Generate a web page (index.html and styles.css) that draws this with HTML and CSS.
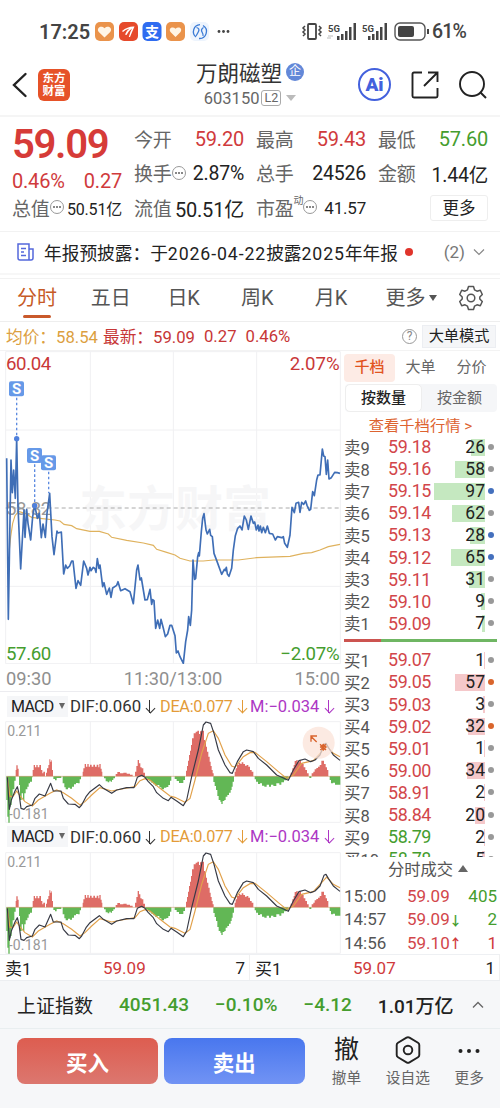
FILE: index.html
```html
<!DOCTYPE html>
<html lang="zh-CN">

<head>
  <meta charset="UTF-8">
  <meta name="viewport" content="width=device-width, initial-scale=1.0">
  <title>万朗磁塑 603150</title>
  <link rel="stylesheet" href="styles.css">
</head>

<body>
  <!-- status bar -->
  <div class="status-bar">
    <span class="clock">17:25</span>
    <svg class="status-apps" width="140" height="20" viewBox="0 0 140 20">
      <rect x="0" y="0" width="19" height="19" rx="5" fill="#ea934b"/>
      <path d="M9.500 15.500L3.800 10C1 6.500 5.500 2.500 9.500 6.200C13.500 2.500 18 6.500 15.200 10Z" fill="#fff5e6"/>
      <rect x="24" y="0" width="19" height="19" rx="5" fill="#e64a2b"/>
      <path d="M27 9Q33 4 39.500 4.500Q37 10 35 15L33.800 15Q35 10 37 6.500Q33 9 31.500 13L30 12.500Q31 9 34.500 6.500Q30 7.500 28 10Z" fill="#fff"/>
      <rect x="47.500" y="0" width="19" height="19" rx="5" fill="#2f6cf0"/>
      <text x="57" y="14.500" class="app-char">支</text>
      <rect x="71" y="0" width="19" height="19" rx="5" fill="#ea934b"/>
      <path d="M80.500 15L75.500 10C73 6.500 77.500 4 80.500 6.700C83.500 4 88 6.500 85.500 10Z" fill="#fff5e6"/>
      <rect x="95" y="0" width="19" height="19" rx="5" fill="#edf4fd"/>
      <g fill="none" stroke="#3b7bd6" stroke-width="1.300">
        <path d="M101 15A7 7 0 0 1 105 2.600M108 3.500A7 7 0 0 1 104 16.500"/>
        <path d="M101.500 5.500Q105 6.500 103.500 9.500T101 14M108.500 5.500Q105.500 7.500 107 10T108 14"/>
      </g>
      <g fill="#444"><circle cx="124" cy="9.500" r="1.400"/><circle cx="128.500" cy="9.500" r="1.400"/><circle cx="133" cy="9.500" r="1.400"/></g>
    </svg>
    <svg class="status-signal" width="130" height="20" viewBox="0 0 130 20">
      <rect x="7" y="2" width="8" height="15" rx="1" fill="none" stroke="#444" stroke-width="1.800"/>
      <path d="M4 4L2 6L4 8L2 10L4 12L2 14M18 4L20 6L18 8L20 10L18 12L20 14" fill="none" stroke="#444" stroke-width="1.500"/>
      <g fill="#444">
        <text x="27" y="9.500" class="net">5G</text>
        <path d="M36 14h2.500v4H36zM40 12h2.500v6H40zM44 9h2.500v9H44zM48 5h2.500v13H48zM52.500 1h2.500v17h-2.500z"/>
        <text x="61" y="9.500" class="net">5G</text>
        <path d="M67 14h2.500v4H67zM71 12h2.500v6H71zM75 9h2.500v9H75zM79 5h2.500v13H79zM83.500 1H86v17h-2.500z"/>
        <rect x="97" y="4" width="16" height="11" rx="2"/>
        <path d="M126 7h2v5h-2z"/>
      </g>
      <path d="M27 14h5M30 16h-4" stroke="#bbb"/>
      <rect x="94" y="1" width="30" height="17" rx="5" fill="none" stroke="#555" stroke-width="1.400"/>
    </svg>
    <span class="battery">61%</span>
  </div>

  <!-- title bar -->
  <header class="title-bar">
    <svg class="back" width="16" height="26" viewBox="0 0 16 26"><path d="M13.500 2L2 13L13.500 24" fill="none" stroke="#222" stroke-width="2.400" stroke-linecap="round"/></svg>
    <div class="app-logo">东方<br>财富</div>
    <div class="stock">
      <div class="stock-name">万朗磁塑<span class="badge-qi">企</span></div>
      <div class="stock-code">603150<span class="level">L2</span><i class="caret"></i></div>
    </div>
    <div class="ai">Ai</div>
    <svg class="share" width="28" height="28" viewBox="0 0 28 28"><path d="M11 1.500H3Q1.500 1.500 1.500 3V25Q1.500 26.500 3 26.500H25Q26.500 26.500 26.500 25V17M17 1.500H26.500V11M26 2L13 15" fill="none" stroke="#222" stroke-width="1.900"/></svg>
    <svg class="search" width="28" height="28" viewBox="0 0 28 28"><circle cx="13" cy="13" r="12" fill="none" stroke="#222" stroke-width="1.900"/><path d="M21.500 21.500L27 27" stroke="#222" stroke-width="2"/></svg>
  </header>

  <!-- quote -->
  <section class="quote">
    <div class="quote-col first">
      <div class="last-price">59.09</div>
      <div class="cell change"><span>0.46%</span><span>0.27</span></div>
      <div class="cell"><label>总值<i class="more-dot"></i></label><span class="small">50.51亿</span></div>
    </div>
    <div class="quote-col">
      <div class="cell"><label>今开</label><span class="red">59.20</span></div>
      <div class="cell"><label>换手<i class="more-dot"></i></label><span class="mid">2.87%</span></div>
      <div class="cell"><label>流值</label><span>50.51亿</span></div>
    </div>
    <div class="quote-col">
      <div class="cell"><label>最高</label><span class="red">59.43</span></div>
      <div class="cell"><label>总手</label><span class="mid">24526</span></div>
      <div class="cell"><label>市盈<sup>动</sup><i class="more-dot"></i></label><span class="pe">41.57</span></div>
    </div>
    <div class="quote-col">
      <div class="cell"><label>最低</label><span class="green">57.60</span></div>
      <div class="cell"><label>金额</label><span class="mid">1.44亿</span></div>
      <div class="cell end"><button class="more-btn">更多</button></div>
    </div>
  </section>

  <!-- notice -->
  <section class="notice">
    <svg width="17" height="18" viewBox="0 0 17 18"><path d="M1 1H12V17H3Q1 17 1 15ZM12 6H16V15Q16 17 14 17H11M4 5.500H9M4 9H7M4 12.500H9" fill="none" stroke="#5468dc" stroke-width="1.500"/></svg>
    <span class="notice-text">年报预披露：于<span class="num">2026-04-22</span>披露<span class="num">2025</span>年年报</span>
    <i class="red-dot"></i>
    <span class="notice-count">(2)</span>
    <svg width="12" height="8" viewBox="0 0 12 8"><path d="M1 1.500L6 6.500L11 1.500" fill="none" stroke="#888" stroke-width="1.200"/></svg>
  </section>

  <!-- period tabs -->
  <nav class="tabs">
    <a class="active">分时</a>
    <a>五日</a>
    <a>日K</a>
    <a>周K</a>
    <a>月K</a>
    <a class="tab-more">更多<i></i></a>
    <svg width="24" height="26" viewBox="0 0 24 26"><path d="M9.500 1.500H14.500L15.500 4.800L18 6.200L21.300 5.300L23.300 9.500L20.800 12V14L23.300 16.500L21.300 20.700L18 19.800L15.500 21.200L14.500 24.500H9.500L8.500 21.200L6 19.800L2.700 20.700L.7 16.500L3.200 14V12L.7 9.500L2.700 5.300L6 6.200L8.500 4.800Z" fill="none" stroke="#555" stroke-width="1.500" stroke-linejoin="round"/><circle cx="12" cy="13" r="3.800" fill="none" stroke="#555" stroke-width="1.500"/></svg>
  </nav>

  <div class="info-row">
    <span class="avg">均价：58.54</span>
    <span class="latest">最新：59.09</span>
    <span class="latest">0.27</span>
    <span class="latest">0.46%</span>
    <i class="help">?</i>
    <button class="mode-btn">大单模式</button>
  </div>

  <main class="main">
    <div class="charts">
      <!-- 3 units per pixel -->
      <svg class="price-chart" width="342" height="313" viewBox="0 3 1026 939">
        <g class="grid">
          <path d="M17 5V941H1021V5ZM271 5V941M520 5V941M770 5V941M17 240H1021M17 709H1021"/>
        </g>
        <text class="watermark" x="238" y="527" textLength="575">东方财富</text>
        <path class="mid-line" d="M17 474H1021"/>
        <text class="mid-label" x="18" y="494" textLength="136">58.82</text>
        <polyline class="avg-line" points="28,600 32,560 38,520 45,497 56,484 75,490 95,502 120,505 165,510 180,513 192,523 215,527 230,536 270,544 298,544 325,552 335,562 380,571 430,579 460,586 470,598 500,607 525,615 540,625 570,633 610,633 640,630 715,630 770,623 870,619 910,610 935,608 960,600 985,590 1020,583"/>
        <polyline class="price-line" points="20,325 25,808 33,330 37,428 41,360 46,445 50,266 54,470 62,657 72,480 75,562 80,478 84,520 92,570 98,500 104,465 112,505 118,490 124,563 129,522 136,562 141,490 149,430 156,560 162,614 171,543 174,549 184,546 191,672 197,645 202,655 209,648 215,633 219,633 228,715 234,692 242,706 251,633 260,655 264,675 270,652 273,662 280,652 285,656 288,667 292,626 297,655 300,645 308,710 312,698 320,733 328,714 333,742 338,714 350,706 354,695 362,722 375,716 390,725 400,761 410,660 414,645 420,690 424,684 435,750 442,749 450,718 455,763 458,749 462,752 467,835 473,810 479,835 483,808 490,835 496,860 503,852 510,826 515,826 525,857 529,909 534,903 540,920 550,940 557,875 563,840 566,800 571,826 575,780 579,630 584,688 587,685 593,620 596,608 598,618 604,545 608,505 612,491 618,540 622,552 629,538 632,556 637,560 642,610 651,634 665,673 673,658 676,662 679,652 682,672 687,679 695,655 700,600 706,557 713,535 720,528 726,540 733,498 739,510 745,538 753,498 760,520 764,516 769,540 774,525 777,543 781,528 785,548 790,532 796,548 802,528 808,550 818,552 826,570 832,560 845,563 850,560 854,580 862,592 870,555 876,472 883,488 888,460 896,457 900,487 905,457 911,463 917,453 921,466 928,481 932,478 938,425 943,437 950,390 954,375 960,375 967,297 971,318 975,320 979,373 983,330 987,387 994,383 1004,367 1012,368 1020,370"/>
        <g class="marks">
          <path d="M50 143V262M104 343V465M146 365V430"/>
          <circle cx="50" cy="266" r="8"/><circle cx="104" cy="467" r="8"/>
          <rect x="27" y="94" width="45" height="45" rx="6"/>
          <rect x="81" y="294" width="45" height="45" rx="6"/>
          <rect x="123" y="316" width="45" height="45" rx="6"/>
          <text x="49.500" y="132">S</text><text x="103.500" y="332">S</text><text x="145.500" y="354">S</text>
        </g>
        <text class="axis up" x="18" y="61" textLength="136">60.04</text>
        <text class="axis up" x="869" y="61" textLength="150">2.07%</text>
        <text class="axis down" x="18" y="930" textLength="136">57.60</text>
        <text class="axis down" x="841" y="930" textLength="178">−2.07%</text>
      </svg>
      <div class="times"><span>09:30</span><span>11:30/13:00</span><span>15:00</span></div>

      <div class="macd-head"><span class="macd-select">MACD<i></i></span><span class="dif">DIF:0.060<b></b></span><span class="dea">DEA:0.077<b></b></span><span class="m">M:−0.034<b></b></span></div>
      <svg class="macd-chart" width="342" height="102" viewBox="0 93 1026 306">
        <defs>
          <g id="macd">
            <path class="grid" d="M17 95V397H1021V95ZM271 95V397M520 95V397M770 95V397"/>
            <path fill="#de6c66" d="M47 259V240H49V226H53V236H56V259ZM98 259V240H101V225H105V232H109V225H113V232H118V225H123V240H127V250H130V245H135V259ZM138 259V248H141V235H145V225H148V208H151V215H154V211H156V240H159V259ZM248 259V245H250V235H254V222H258V230H262V222H266V230H270V224H275V230H280V224H285V230H290V224H295V232H298V222H302V236H305V245H307V259ZM347 259V252H352V246H360V250H370V248H380V251H390V254H398V259ZM405 259V245H409V228H413V210H417V220H421V232H425V235H430V248H435V259Z"/>
            <path fill="#de6c66" d="M558 259V242H561V228H564V212H567V195H570V182H573V165H576V145H581V130H587V125H592V122H597V132H600V124H604V122H612V150H615V155H618V170H621V185H625V200H629V215H632V228H635V240H638V250H641V259ZM704 259V245H707V235H711V225H716V219H721V222H725V217H730V222H735V227H740V225H745V230H750V240H755V245H760V259ZM872 259V248H877V235H881V225H884V213H889V210H893V217H898V212H903V220H908V222H911V232H916V240H921V250H926V259ZM935 259V250H940V245H944V238H949V234H954V230H959V225H964V212H972V222H977V232H981V240H985V259Z"/>
            <path fill="#62b755" d="M19 259V330H22V380H25V398H29V350H32V345H35V320H38V298H43V272H47V259ZM57 259V285H60V330H65V310H69V330H73V310H77V298H82V290H86V280H90V275H96V262H98V259ZM160 259V267H165V271H170V264H184V259ZM188 259V280H193V292H197V298H204V293H210V296H216V290H222V283H228V279H234V280H239V268H243V259ZM312 259V265H317V274H323V277H328V272H332V275H336V270H340V265H345V259ZM436 259V265H442V270H448V274H454V278H460V283H466V288H472V285H478V292H484V298H492V293H499V291H505V285H510V272H514V259ZM524 259V267H530V273H537V279H550V270H555V259ZM640 259V276H644V288H648V300H652V318H656V330H661V335H664V342H668V333H673V330H677V320H682V315H687V308H692V300H695V290H698V275H702V259ZM764 259V268H768V275H774V282H780V280H786V287H793V290H800V284H807V290H813V284H820V288H829V280H838V284H844V277H852V271H859V268H865V259ZM928 259V264H934V259ZM989 259V270H993V280H999V278H1005V284H1021V259Z"/>
            <path d="M19 259H1020" stroke="#c98a58" stroke-width="1.500"/>
            <polyline class="dea-line" points="22,262 30,320 40,318 50,303 60,318 75,335 97,348 115,330 150,310 170,300 190,308 215,325 240,345 255,335 275,315 300,293 335,303 365,297 405,290 420,272 435,266 450,270 480,295 510,318 525,322 555,337 570,325 585,270 605,190 625,130 640,122 655,145 675,195 695,228 705,232 730,200 750,188 765,187 800,215 835,245 860,265 880,255 905,220 940,212 960,190 980,168 1000,190 1020,200"/>
            <polyline class="dif-line" points="22,262 28,358 34,330 45,303 52,290 57,310 63,355 72,358 80,350 97,345 105,325 118,312 135,318 143,300 152,280 160,303 183,303 190,325 205,342 225,343 238,353 245,345 258,320 270,305 298,284 310,295 335,310 350,300 380,293 402,293 412,262 425,256 435,262 445,275 460,290 470,308 490,325 505,332 513,322 530,333 550,347 560,330 575,260 595,180 610,105 618,96 632,100 642,130 655,180 675,225 690,248 697,250 712,215 730,185 740,180 760,185 775,205 800,225 830,255 865,271 880,240 897,212 915,207 932,215 945,210 960,195 972,163 978,160 985,172 1000,195 1020,211"/>
            <text class="macd-axis" x="22" y="138" textLength="102">0.211</text>
            <text class="macd-axis" x="26" y="388" textLength="120">-0.181</text>
          </g>
        </defs>
        <use href="#macd"/>
        <!-- expand button -->
        <circle cx="956" cy="158" r="48" fill="#fbe3d8" opacity=".75"/>
        <path d="M950 156L934 140M933 155V138H951M960 163L978 180M961 180L978 163M962 171L970 163L978 171L970 180Z" fill="none" stroke="#d9632c" stroke-width="4"/>
      </svg>
      <div class="macd-head"><span class="macd-select">MACD<i></i></span><span class="dif">DIF:0.060<b></b></span><span class="dea">DEA:0.077<b></b></span><span class="m">M:−0.034<b></b></span></div>
      <svg class="macd-chart" width="342" height="102" viewBox="0 93 1026 306"><use href="#macd"/></svg>
    </div>

    <aside class="book">
      <div class="book-tabs"><span class="active">千档</span><span>大单</span><span>分价</span></div>
      <div class="segment"><span class="active">按数量</span><span>按金额</span></div>
      <a class="book-link">查看千档行情 &gt;</a>
      <div class="levels sell">
        <div class="level-row"><span>卖9</span><span class="p">59.18</span><span class="v"><i style="width:14px"></i>26</span><b></b></div>
        <div class="level-row"><span>卖8</span><span class="p">59.16</span><span class="v"><i style="width:30px"></i>58</span><b></b></div>
        <div class="level-row"><span>卖7</span><span class="p">59.15</span><span class="v"><i style="width:51px"></i>97</span><b class="blue"></b></div>
        <div class="level-row"><span>卖6</span><span class="p">59.14</span><span class="v"><i style="width:33px"></i>62</span><b></b></div>
        <div class="level-row"><span>卖5</span><span class="p">59.13</span><span class="v"><i style="width:15px"></i>28</span><b class="blue"></b></div>
        <div class="level-row"><span>卖4</span><span class="p">59.12</span><span class="v"><i style="width:34px"></i>65</span><b class="blue"></b></div>
        <div class="level-row"><span>卖3</span><span class="p">59.11</span><span class="v"><i style="width:16px"></i>31</span><b></b></div>
        <div class="level-row"><span>卖2</span><span class="p">59.10</span><span class="v"><i style="width:4px"></i>9</span><b></b></div>
        <div class="level-row"><span>卖1</span><span class="p">59.09</span><span class="v"><i style="width:3px"></i>7</span><b></b></div>
      </div>
      <div class="ratio"><i style="width:24.5%"></i></div>
      <div class="levels buy">
        <div class="level-row"><span>买1</span><span class="p">59.07</span><span class="v"><i style="width:1px"></i>1</span><b></b></div>
        <div class="level-row"><span>买2</span><span class="p">59.05</span><span class="v"><i style="width:30px"></i>57</span><b class="orange"></b></div>
        <div class="level-row"><span>买3</span><span class="p">59.03</span><span class="v"><i style="width:2px"></i>3</span><b></b></div>
        <div class="level-row"><span>买4</span><span class="p">59.02</span><span class="v"><i style="width:17px"></i>32</span><b class="orange"></b></div>
        <div class="level-row"><span>买5</span><span class="p">59.01</span><span class="v"><i style="width:1px"></i>1</span><b></b></div>
        <div class="level-row"><span>买6</span><span class="p">59.00</span><span class="v"><i style="width:18px"></i>34</span><b></b></div>
        <div class="level-row"><span>买7</span><span class="p">58.91</span><span class="v"><i style="width:1px"></i>2</span><b></b></div>
        <div class="level-row"><span>买8</span><span class="p">58.84</span><span class="v"><i style="width:10px"></i>20</span><b></b></div>
        <div class="level-row"><span>买9</span><span class="p green">58.79</span><span class="v"><i style="width:1px"></i>2</span><b></b></div>
        <div class="level-row"><span>买10</span><span class="p green">58.78</span><span class="v"><i style="width:3px"></i>5</span><b></b></div>
      </div>
      <div class="deals-title">分时成交<i></i></div>
      <div class="deal"><span>15:00</span><span class="p">59.09</span><em class="green"></em><span class="q green">405</span></div>
      <div class="deal"><span>14:57</span><span class="p">59.09</span><em class="green">↓</em><span class="q green">2</span></div>
      <div class="deal"><span>14:56</span><span class="p">59.10</span><em class="red">↑</em><span class="q red">1</span></div>
    </aside>
  </main>

  <div class="best">
    <div class="best-side"><span>卖1</span><span class="red">59.09</span><span>7</span></div>
    <div class="best-side"><span>买1</span><span class="red">59.07</span><span>1</span></div>
  </div>

  <footer class="footer">
    <div class="index-row">
      <span class="index-name">上证指数</span>
      <span class="green">4051.43</span>
      <span class="green">−0.10%</span>
      <span class="green">−4.12</span>
      <span class="amount">1.01万亿</span>
      <svg width="12" height="8" viewBox="0 0 12 8"><path d="M1 6.500L6 1.500L11 6.500" fill="none" stroke="#666" stroke-width="1.300"/></svg>
    </div>
    <div class="actions">
      <button class="trade buy-btn">买入</button>
      <button class="trade sell-btn">卖出</button>
      <div class="action"><span class="glyph">撤</span>撤单</div>
      <div class="action"><svg width="26" height="28" viewBox="0 0 26 28"><path d="M11.500 1.700Q13 .9 14.500 1.700L23 6.700Q24.300 7.500 24.300 9V19Q24.300 20.500 23 21.300L14.500 26.300Q13 27.100 11.500 26.300L3 21.300Q1.700 20.500 1.700 19V9Q1.700 7.500 3 6.700Z" fill="none" stroke="#222" stroke-width="1.900"/><circle cx="13" cy="14" r="4.300" fill="none" stroke="#222" stroke-width="1.900"/></svg>设自选</div>
      <div class="action"><svg width="26" height="28" viewBox="0 0 26 28"><g fill="#222"><circle cx="4.500" cy="15" r="2"/><circle cx="13" cy="15" r="2"/><circle cx="21.500" cy="15" r="2"/></g></svg>更多</div>
    </div>
  </footer>
</body>

</html>
```
FILE: styles.css
```css
* {
  box-sizing: border-box;
}

body {
  margin: 0;
  width: 500px;
  height: 1108px;
  overflow: hidden;
  background-color: #fff;
  font-family: Roboto, "Noto Sans CJK SC", sans-serif;
  color: #222;
}

i,
em {
  font-style: normal;
}

button {
  font-family: inherit;
  padding: 0;
  border: none;
}

.red {
  color: #d03a3c;
}

.green {
  color: #459d2e;
}

/* status bar */
.status-bar {
  display: flex;
  align-items: center;
  height: 57px;
  padding: 6px 0 0 39px;
  color: #444;
}

.clock {
  width: 56px;
  font-size: 20px;
  font-weight: 600;
}

.app-char {
  font-size: 14px;
  font-weight: 700;
  fill: #fff;
  text-anchor: middle;
}

.status-signal {
  margin-left: 66px;
}

.net {
  font-size: 9.5px;
  font-weight: 700;
}

.battery {
  margin-left: 1px;
  font-size: 19.5px;
  font-weight: 500;
  letter-spacing: -0.8px;
}

/* title bar */
.title-bar {
  display: flex;
  align-items: center;
  height: 60px;
  padding: 0 12px 3px;
  border-bottom: 2px solid #f5f5f5;
}

.app-logo {
  width: 32px;
  height: 32px;
  margin-left: 10px;
  padding-top: 3px;
  border-radius: 6px;
  background-color: #e65228;
  color: #fff;
  font-size: 11.5px;
  line-height: 13px;
  font-weight: 700;
  text-align: center;
}

.stock {
  width: 120px;
  margin-left: 120px;
  text-align: center;
  white-space: nowrap;
}

.stock-name {
  display: flex;
  align-items: center;
  justify-content: center;
  height: 27px;
  font-size: 21.5px;
  color: #333;
}

.badge-qi {
  width: 18px;
  height: 18px;
  margin-left: 4px;
  border-radius: 50%;
  background-color: #6388d8;
  color: #fff;
  font-size: 12px;
  line-height: 17px;
}

.stock-code {
  display: flex;
  align-items: center;
  justify-content: center;
  height: 26px;
  color: #666;
  font-size: 16.5px;
}

.level {
  margin-left: 2px;
  padding: 0 2px;
  border: 1px solid #aaa;
  border-radius: 3px;
  font-size: 12.5px;
  line-height: 14px;
}

.caret {
  margin-left: 5px;
  border: 5px solid transparent;
  border-top: 6px solid #bbb;
  border-bottom: 0;
}

.ai {
  width: 33px;
  height: 33px;
  margin-left: 48px;
  border: 2px solid #4361dd;
  border-radius: 50%;
  color: #4361dd;
  font-size: 19px;
  line-height: 29px;
  font-weight: 900;
  text-align: center;
}

.share {
  margin-left: 20px;
}

.search {
  margin-left: 20px;
}

/* quote */
.quote {
  display: grid;
  grid-template-columns: repeat(4, 110px);
  column-gap: 12px;
  height: 115px;
  padding: 5px 12px 0;
  border-bottom: 1px solid #f2f2f2;
}

.cell {
  display: flex;
  align-items: center;
  justify-content: space-between;
  height: 34.5px;
  font-size: 20px;
  letter-spacing: -0.2px;
  white-space: nowrap;
}

.cell label {
  display: flex;
  align-items: center;
  margin-top: -2px;
  color: #666;
  font-size: 19px;
}

.cell .mid {
  font-size: 19.5px;
}

.cell .small {
  font-size: 16px;
}

.cell sup {
  margin: -16px 0 0 0;
  font-size: 10px;
}

.cell .pe {
  font-size: 17px;
}

.last-price {
  height: 46px;
  color: #d63b38;
  font-size: 40px;
  line-height: 46px;
  font-weight: 600;
  letter-spacing: -1.3px;
}

.first .cell {
  height: 23px;
}

.first .cell + .cell {
  height: 34.5px;
}

.first .change {
  height: 23px;
  padding-top: 2px;
  color: #d03a3c;
}

.more-dot {
  position: relative;
  width: 14px;
  height: 14px;
  border: 1px solid #999;
  border-radius: 50%;
}

.more-dot::before {
  content: "";
  position: absolute;
  top: 5px;
  left: 2px;
  width: 8px;
  border-top: 2px dotted #888;
}

.cell.end {
  justify-content: flex-end;
}

.more-btn {
  width: 58px;
  height: 26px;
  border: 1px solid #eee;
  border-radius: 3px;
  background-color: #fff;
  color: #222;
  font-size: 16.5px;
  line-height: 23px;
}

/* notice */
.notice {
  display: flex;
  align-items: center;
  height: 47px;
  padding: 0 15px 7px 17px;
  border-bottom: 1px solid #f2f2f2;
  background: linear-gradient(#fff 41px, #f7f7f7 41px, #f7f7f7 43px, #fff 43px);
}

.notice-text {
  margin-left: 10px;
  font-size: 17.7px;
  white-space: nowrap;
}

.notice-text .num {
  letter-spacing: 0.9px;
}

.red-dot {
  width: 8px;
  height: 8px;
  margin-left: 7px;
  border-radius: 50%;
  background-color: #e0342b;
}

.notice-count {
  margin: 0 8px 0 auto;
  color: #777;
  font-size: 17px;
}

/* tabs */
.tabs {
  display: flex;
  align-items: center;
  height: 43px;
  padding: 0 0 4px 17px;
  border-bottom: 1px solid #eee;
  color: #555;
  font-size: 20px;
  line-height: 38px;
}

.tabs a {
  position: relative;
  flex: 0 0 73.7px;
  white-space: nowrap;
}

.tabs a:nth-child(3) {
  padding-left: 3px;
}

.tabs a:nth-child(4) {
  padding-left: 3px;
}

.tabs a:nth-child(5) {
  padding-left: 3px;
}

.tabs .active {
  color: #c65a26;
}

.tabs .active::after {
  content: "";
  position: absolute;
  left: 6px;
  bottom: -1px;
  width: 28px;
  height: 3px;
  border-radius: 2px;
  background-color: #c9592b;
}

.tab-more i {
  display: inline-block;
  margin-left: 4px;
  vertical-align: 4px;
  border: 4px solid transparent;
  border-top: 6px solid #555;
  border-bottom: 0;
}

/* average / latest row */
.info-row {
  display: flex;
  align-items: center;
  height: 29px;
  padding: 0 4px 0 6px;
  border-bottom: 1px solid #f3f3f3;
  font-size: 16.7px;
  white-space: nowrap;
}

.avg {
  margin-right: 5px;
  color: #dca03f;
}

.latest {
  margin-right: 9px;
  color: #c73636;
}

.help {
  width: 15px;
  height: 15px;
  margin-left: auto;
  border: 1px solid #999;
  border-radius: 50%;
  color: #888;
  font-size: 12px;
  line-height: 13px;
  text-align: center;
}

.mode-btn {
  width: 74px;
  height: 23px;
  margin-left: 5px;
  border: 1px solid #eceef2;
  background-color: #f5f6f8;
  color: #222;
  font-size: 15.2px;
  line-height: 21px;
}

/* main area */
.main {
  display: flex;
  height: 603px;
}

.charts {
  width: 342px;
}

.charts svg {
  display: block;
}

.grid {
  fill: none;
  stroke: #f0f0f2;
  stroke-width: 3;
}

.watermark {
  fill: #f6f6f7;
  font-size: 143px;
  font-weight: 700;
}

.mid-line {
  stroke: #aaa;
  stroke-width: 3;
  stroke-dasharray: 12 9;
}

.axis,
.mid-label {
  font-size: 56px;
}

.up {
  fill: #c93838;
}

.down {
  fill: #459d2e;
}

.mid-label {
  fill: #999;
}

.price-line {
  fill: none;
  stroke: #3f6eb6;
  stroke-width: 5;
  stroke-linejoin: round;
}

.avg-line {
  fill: none;
  stroke: #dfb25e;
  stroke-width: 3.5;
}

.marks {
  fill: #4f80dc;
}

.marks path {
  stroke: #5c8ae0;
  stroke-width: 4;
  stroke-dasharray: 8 7;
}

.marks rect {
  fill: #6699e8;
}

.marks text {
  fill: #fff;
  font-size: 45px;
  font-weight: 700;
  text-anchor: middle;
}

.times {
  display: flex;
  justify-content: space-between;
  height: 28px;
  padding: 0 2px 0 6px;
  border-bottom: 1px solid #ececf0;
  color: #8f8f8f;
  font-size: 18.3px;
  line-height: 29px;
}

.macd-head {
  display: flex;
  align-items: center;
  height: 29px;
  padding: 0 0 1px 7px;
  font-size: 16.8px;
  white-space: nowrap;
}

.macd-chart + .macd-head {
  height: 28.5px;
}

.macd-select {
  width: 61px;
  height: 21px;
  padding-left: 4px;
  background-color: #f5f6f8;
  font-size: 16px;
  line-height: 21px;
  letter-spacing: -0.7px;
}

.macd-select i {
  display: inline-block;
  margin-left: 5px;
  vertical-align: 3px;
  border: 3.5px solid transparent;
  border-top: 6px solid #666;
  border-bottom: 0;
}

.macd-head b {
  display: inline-block;
  position: relative;
  width: 9px;
  height: 13px;
  margin-left: 4px;
  vertical-align: -1px;
  background: linear-gradient(currentColor, currentColor) center / 1.3px 100% no-repeat;
}

.macd-head b::after {
  content: "";
  position: absolute;
  left: 1.5px;
  bottom: 1px;
  width: 6px;
  height: 6px;
  border: solid currentColor;
  border-width: 0 1.3px 1.3px 0;
  transform: rotate(45deg);
}

.dif {
  width: 90px;
  margin-left: 2px;
  color: #333;
}

.dea {
  width: 90px;
  color: #e39b38;
  font-size: 16.3px;
  letter-spacing: -0.3px;
}

.m {
  color: #ad37c4;
  font-size: 16.5px;
}

.m b,
.dea b {
  margin-left: 5px;
}

.dea-line {
  fill: none;
  stroke: #e2a24c;
  stroke-width: 3.5;
}

.dif-line {
  fill: none;
  stroke: #373a45;
  stroke-width: 3.5;
  stroke-linejoin: round;
}

.macd-axis {
  fill: #999;
  font-size: 42px;
}

/* order book */
.book {
  display: flex;
  flex-direction: column;
  width: 158px;
  padding: 3px 3px 0 2px;
}

.book-tabs {
  display: flex;
  flex: 0 0 28px;
  color: #666;
  font-size: 15px;
  line-height: 27px;
  text-align: center;
}

.book-tabs span {
  flex: 1;
}

.book-tabs .active {
  border-radius: 4px;
  background-color: #fdebe5;
  color: #e2541f;
  font-weight: 500;
}

.segment {
  display: flex;
  flex: 0 0 28px;
  margin: 2px 0 0 1px;
  border-radius: 4px;
  background-color: #f5f6f8;
  color: #666;
  font-size: 15px;
  line-height: 28px;
  text-align: center;
}

.segment span {
  flex: 1;
}

.segment .active {
  border: 1px solid #eee;
  border-radius: 5px;
  background-color: #fff;
  color: #222;
  font-weight: 500;
  line-height: 26px;
}

.book-link {
  height: 23.5px;
  min-height: 0;
  flex: none;
  color: #dd6330;
  font-size: 15.3px;
  line-height: 28px;
  text-align: center;
}

.levels {
  flex: none;
}

.level-row {
  display: flex;
  align-items: center;
  height: 22.1px;
  font-size: 17.5px;
  color: #555;
}

.level-row > span:first-child {
  width: 44px;
  font-size: 16.5px;
  white-space: nowrap;
}

.level-row .p {
  width: 42px;
  color: #d2464a;
  font-size: 17.9px;
  letter-spacing: -0.4px;
}

.level-row .green {
  color: #459d2e;
}

.level-row .v {
  position: relative;
  z-index: 0;
  width: 55px;
  color: #222;
  text-align: right;
}

.level-row .v i {
  position: absolute;
  z-index: -1;
  top: 2px;
  right: 0;
  height: 17px;
  background-color: #c5e8c0;
}

.buy .v i {
  background-color: #f5c8ca;
}

.level-row b {
  width: 6px;
  height: 6px;
  margin-left: 3px;
  border-radius: 50%;
  background-color: #999;
}

.level-row .blue {
  background-color: #4470bd;
}

.level-row .orange {
  background-color: #d9652c;
}

.ratio {
  flex: 0 0 3px;
  margin-top: 5px;
  background-color: #6fb663;
}

.ratio i {
  display: block;
  height: 3px;
  background-color: #cc5450;
}

.buy {
  height: 208px;
  margin-top: 6.5px;
  overflow: hidden;
}

.deals-title {
  flex: 0 0 27px;
  padding-left: 44px;
  color: #555;
  font-size: 16.3px;
  line-height: 26px;
}

.deals-title i {
  display: inline-block;
  margin-left: 5px;
  vertical-align: 3px;
  border: 5px solid transparent;
  border-top: 0;
  border-bottom: 7px solid #666;
}

.deal {
  display: flex;
  align-items: center;
  flex: 0 0 23.5px;
  color: #555;
  font-size: 17px;
}

.deal > span:first-child {
  width: 63px;
}

.deal .p {
  width: 42px;
  color: #d2464a;
}

.deal em {
  width: 12px;
  font-size: 13px;
  font-weight: 700;
}

.deal .q {
  margin-left: auto;
}

/* best bid / ask */
.best {
  display: flex;
  height: 27px;
  border-top: 1px solid #eef0f3;
  border-bottom: 1px solid #eceef1;
}

.best-side {
  display: grid;
  grid-template-columns: 98px 1fr auto;
  align-items: center;
  width: 250px;
  padding: 0 4px 0 5px;
  border-right: 1px solid #f0f0f0;
  font-size: 17px;
}

/* footer */
.footer {
  height: 127px;
  background-color: #f6f7f9;
}

.index-row {
  display: flex;
  align-items: center;
  height: 48px;
  padding: 0 16px 0 17px;
  border-bottom: 1px solid #e9eef0;
  font-size: 19px;
  font-weight: 500;
}

.index-row span {
  margin-right: 26px;
  white-space: nowrap;
}

.index-row .index-name {
  font-weight: 400;
}

.index-row .amount {
  margin-right: auto;
}

.actions {
  display: flex;
  padding: 9px 0 0 17px;
}

.trade {
  width: 141px;
  height: 46px;
  margin-right: 6px;
  border-radius: 8px;
  color: #fff;
  font-size: 21.5px;
  font-weight: 700;
}

.buy-btn {
  background: linear-gradient(#dd5d50, #dc776f);
}

.sell-btn {
  background: linear-gradient(#4977ee, #7193f4);
}

.action {
  display: flex;
  flex-direction: column;
  align-items: center;
  width: 61.5px;
  margin-top: -2px;
  color: #666;
  font-size: 14.7px;
  line-height: 24px;
}

.action:nth-child(3) {
  margin-left: 5px;
}

.action svg,
.glyph {
  height: 28px;
  margin-bottom: 2px;
}

.glyph {
  color: #222;
  font-size: 25px;
  line-height: 28px;
}
```
